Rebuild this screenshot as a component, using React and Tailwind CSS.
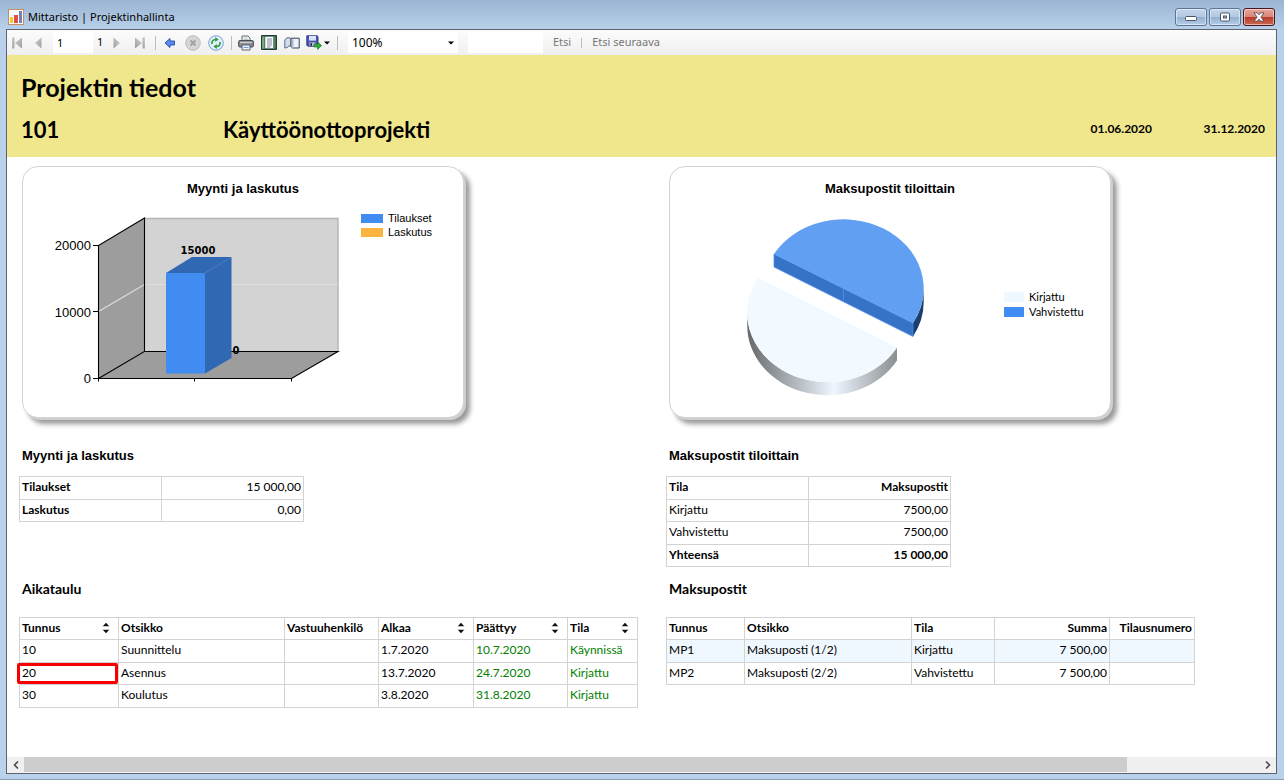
import { useState } from "react";
import clsx from "clsx";

const SCHEDULE_COLUMNS = [
  { title: "Tunnus", width: "w-[99px]", sortable: true },
  { title: "Otsikko", width: "w-[166px]" },
  { title: "Vastuuhenkilö", width: "w-[94px]" },
  { title: "Alkaa", width: "w-[95px]", sortable: true },
  { title: "Päättyy", width: "w-[94px]", sortable: true },
  { title: "Tila", width: "w-[70px]", sortable: true },
];

const SCHEDULE = [
  { id: "10", title: "Suunnittelu", owner: "", start: "1.7.2020", end: "10.7.2020", state: "Käynnissä" },
  { id: "20", title: "Asennus", owner: "", start: "13.7.2020", end: "24.7.2020", state: "Kirjattu" },
  { id: "30", title: "Koulutus", owner: "", start: "3.8.2020", end: "31.8.2020", state: "Kirjattu" },
];

const PAYMENT_COLUMNS = [
  { title: "Tunnus", width: "w-[78px]" },
  { title: "Otsikko", width: "w-[167px]" },
  { title: "Tila", width: "w-[83px]" },
  { title: "Summa", width: "w-[115px]", right: true },
  { title: "Tilausnumero", width: "w-[85px]", right: true },
];

const PAYMENTS = [
  { id: "MP1", title: "Maksuposti (1/2)", state: "Kirjattu", sum: "7 500,00", order: "" },
  { id: "MP2", title: "Maksuposti (2/2)", state: "Vahvistettu", sum: "7 500,00", order: "" },
];

const CELL = "border border-[#d3d3d3] px-0.5 pt-0 pb-0.5 whitespace-nowrap";
const TABLE = "table-fixed border-collapse text-[12px] leading-4";

function AppIcon() {
  return (
    <svg width="16" height="16" viewBox="0 0 16 16">
      <rect x="0.5" y="0.5" width="15" height="15" fill="#fdfdff" stroke="#c98d62" />
      <rect x="2" y="8" width="3" height="6" fill="#f8c63a" />
      <rect x="6" y="6" width="4" height="8" fill="#e2503c" />
      <rect x="11" y="2" width="3" height="12" fill="#7282b8" />
    </svg>
  );
}

function WindowButton({ label, danger, children }) {
  return (
    <button
      type="button"
      aria-label={label}
      className={clsx(
        "flex h-[18px] w-8 items-center justify-center rounded-[3px] border shadow-[inset_0_0_0_1px_rgba(255,255,255,0.5)]",
        danger
          ? "border-[#4a1420] bg-[linear-gradient(#e8a598_0%,#d6867a_48%,#b83a26_50%,#cc6a52_100%)]"
          : "border-[#5b7596] bg-[linear-gradient(#c3d5ea_0%,#b3c9e2_48%,#94b0d0_50%,#b4cde8_100%)]"
      )}
    >
      {children}
    </button>
  );
}

function TitleBar() {
  return (
    <header className="flex h-[29px] items-start justify-between pt-2">
      <div className="flex items-center gap-1 pl-0.5">
        <AppIcon />
        <h1 className="font-['Noto_Sans'] text-[11px] leading-[18px]">Mittaristo | Projektinhallinta</h1>
      </div>
      <div className="flex gap-0.5 pr-[3px]">
        <WindowButton label="Pienennä">
          <svg width="12" height="8" viewBox="0 0 12 8">
            <rect x="0.5" y="3.5" width="11" height="4" rx="1" fill="#fff" stroke="#4b5568" />
          </svg>
        </WindowButton>
        <WindowButton label="Suurenna">
          <svg width="12" height="10" viewBox="0 0 12 10">
            <rect x="1.5" y="1" width="9" height="8" rx="1" fill="#fff" stroke="#4b5568" />
            <rect x="4.5" y="4" width="3" height="2" fill="#9fb8d6" stroke="#4b5568" />
          </svg>
        </WindowButton>
        <WindowButton label="Sulje" danger>
          <svg width="12" height="10" viewBox="0 0 12 10">
            <path d="M1 .8h3.2L6 2.8 7.8.8H11L7.9 5 11 9.2H7.8L6 7.2l-1.8 2H1L4.1 5z" fill="#fff" stroke="#5a4a5a" strokeWidth="0.9" />
          </svg>
        </WindowButton>
      </div>
    </header>
  );
}

function ToolButton({ label, wide, children }) {
  return (
    <button
      type="button"
      aria-label={label}
      className={clsx("flex h-6 shrink-0 items-center justify-center", wide ? "w-[30px] gap-0.5" : "w-[23px]")}
    >
      {children}
    </button>
  );
}

function Separator() {
  return <span className="mr-0.5 ml-1 h-3.5 w-px shrink-0 bg-[#bdbdbd]" />;
}

function StepIcon({ flip, bar }) {
  return (
    <svg width="12" height="12" viewBox="0 0 12 12" className={flip ? "-scale-x-100" : ""}>
      <defs>
        <linearGradient id="step" x1="0" y1="0" x2="1" y2="1">
          <stop offset="0" stopColor="#d2d2d2" />
          <stop offset="1" stopColor="#9c9c9c" />
        </linearGradient>
      </defs>
      {bar && <rect x="1" y="0.5" width="2.4" height="11" fill="url(#step)" />}
      <path d={bar ? "M11 .5v11L4 6z" : "M9.5.5v11L3 6z"} fill="url(#step)" />
    </svg>
  );
}

function BackIcon() {
  return (
    <svg width="12" height="12" viewBox="0 0 12 12">
      <path d="M1 6l5-4.5V4h4.5v4H6v2.5z" fill="#5b8cf0" stroke="#2348a8" strokeWidth="0.9" strokeLinejoin="round" />
    </svg>
  );
}

function StopIcon() {
  return (
    <svg width="16" height="16" viewBox="0 0 16 16">
      <circle cx="8" cy="8" r="7.3" fill="#d6d6d6" stroke="#bcbcbc" />
      <path d="M5.500 5.500l5 5m0-5l-5 5" stroke="#a2a2a2" strokeWidth="2" />
    </svg>
  );
}

function RefreshIcon() {
  return (
    <svg width="16" height="16" viewBox="0 0 16 16">
      <circle cx="8" cy="8" r="7.3" fill="#e2effc" stroke="#7aa2d8" />
      <path d="M4 9C3.600 6.400 5 4.600 7.600 4.500M12 7c.4 2.600-1 4.400-3.600 4.500" fill="none" stroke="#2f9e3a" strokeWidth="1.7" />
      <path d="M7.200 2l3.400 2.500-3.400 2.600zM8.800 8.900l-3.400 2.600 3.400 2.500z" fill="#2f9e3a" />
    </svg>
  );
}

function PrintIcon() {
  return (
    <svg width="16" height="16" viewBox="0 0 16 16">
      <path d="M4 6V1h6l2 2v3z" fill="#fff" stroke="#55585f" strokeWidth="0.9" />
      <path d="M5.5 3h4M5.5 4.6h5" stroke="#8aa" strokeWidth="0.7" />
      <rect x="0.6" y="5.5" width="14.8" height="6.5" rx="1.2" fill="#85888f" stroke="#3f4249" strokeWidth="0.9" />
      <rect x="2" y="6.8" width="12" height="1.4" fill="#c9ccd2" />
      <path d="M4 10h8v5H4z" fill="#eaf2ff" stroke="#55585f" strokeWidth="0.9" />
      <path d="M5.5 12.5h5" stroke="#6aa0dc" />
    </svg>
  );
}

function LayoutIcon() {
  return (
    <svg width="16" height="15" viewBox="0 0 16 15">
      <rect x="0.6" y="0.6" width="14.8" height="13.8" rx="0.5" fill="#4f8a55" stroke="#1f3c2c" strokeWidth="1.2" />
      <path d="M2 1.600v12" stroke="#a8cfa4" strokeWidth="1" />
      <rect x="4" y="1.600" width="8.400" height="11.800" fill="#fff" stroke="#5a6a80" strokeWidth="0.6" />
      <path d="M6 4h5M6 6h5M6 8h5M6 10h5M6 12h3.500" stroke="#6a7496" strokeWidth="0.9" />
    </svg>
  );
}

function BookIcon() {
  return (
    <svg width="16" height="14" viewBox="0 0 16 14">
      <path d="M.8 12V4l2-2.200h3L7 3.400V10H4.600L3.400 11.500z" fill="#d3dcea" stroke="#5d6c86" />
      <path d="M7 10.500V2.200h8.200v9.800H8.600z" fill="#edf2fb" stroke="#39404f" />
      <path d="M8.800 3.200v7.400" fill="none" stroke="#aebfdc" strokeWidth="1.6" />
    </svg>
  );
}

function SaveIcon() {
  return (
    <svg width="16" height="15" viewBox="0 0 16 15" className="shrink-0">
      <path d="M.8.8h10.4l.8.8v9.6H1.8l-1-1z" fill="#4c54b8" stroke="#2b2f7a" strokeWidth="0.9" />
      <rect x="3" y="1" width="7" height="4.600" fill="#d8e4fa" />
      <rect x="3.400" y="7.400" width="6" height="3.600" fill="#b9bccb" />
      <rect x="4.400" y="8.200" width="1.600" height="2.800" fill="#23264f" />
      <path d="M8 9.200h3.600V6.800L15.600 10.600l-4 3.800V12H8z" fill="#2fae3b" stroke="#1c7328" strokeWidth="0.7" />
    </svg>
  );
}

function Caret() {
  return (
    <svg width="6" height="4" viewBox="0 0 6 4" className="shrink-0">
      <path d="M0 .5h6L3 3.5z" fill="#000" />
    </svg>
  );
}

function Toolbar() {
  const [page, setPage] = useState("1");
  const [zoom, setZoom] = useState("100%");
  const [query, setQuery] = useState("");

  return (
    <div className="flex h-[25px] items-center bg-linear-to-b from-[#fcfcfc] to-[#efefef] font-['Noto_Sans'] text-[11px]">
      <button type="button" aria-label="Ensimmäinen sivu" className="flex h-6 w-[19px] shrink-0 items-center justify-center">
        <StepIcon bar />
      </button>
      <ToolButton label="Edellinen sivu"><StepIcon /></ToolButton>
      <input
        aria-label="Sivu"
        value={page}
        onChange={(event) => setPage(event.target.value)}
        className="ml-1 h-[21px] w-10 bg-white pl-1 outline-none"
      />
      <span className="w-3 pl-1">1</span>
      <ToolButton label="Seuraava sivu"><StepIcon flip /></ToolButton>
      <ToolButton label="Viimeinen sivu"><StepIcon flip bar /></ToolButton>
      <Separator />
      <ToolButton label="Takaisin"><BackIcon /></ToolButton>
      <ToolButton label="Pysäytä"><StopIcon /></ToolButton>
      <ToolButton label="Päivitä"><RefreshIcon /></ToolButton>
      <Separator />
      <ToolButton label="Tulosta"><PrintIcon /></ToolButton>
      <ToolButton label="Tulostusasettelu"><LayoutIcon /></ToolButton>
      <ToolButton label="Sivun asetukset"><BookIcon /></ToolButton>
      <ToolButton label="Vie" wide>
        <SaveIcon />
        <Caret />
      </ToolButton>
      <Separator />
      <div className="relative ml-2">
        <select
          aria-label="Zoomaus"
          value={zoom}
          onChange={(event) => setZoom(event.target.value)}
          className="block h-[21px] w-[110px] appearance-none bg-white pl-1 text-[12px] outline-none"
        >
          <option>50%</option>
          <option>100%</option>
          <option>200%</option>
        </select>
        <span className="pointer-events-none absolute inset-y-0 right-1 flex items-center">
          <Caret />
        </span>
      </div>
      <input
        aria-label="Etsittävä teksti"
        value={query}
        onChange={(event) => setQuery(event.target.value)}
        className="ml-2.5 h-[21px] w-[75px] bg-white px-1 outline-none"
      />
      <button type="button" className="ml-2.5 text-[#777]">Etsi</button>
      <span className="mx-2.5 h-2.5 w-px bg-[#bdbdbd]" />
      <button type="button" className="text-[#777]">Etsi seuraava</button>
    </div>
  );
}

function ReportHeader() {
  return (
    <div className="h-[102px] bg-[#f0e68c] pt-4 pr-[11px] pl-3.5 font-bold">
      <h2 className="text-[25px] leading-8">Projektin tiedot</h2>
      <div className="mt-2 flex h-9 items-center">
        <span className="w-[202px] text-[22px]">101</span>
        <span className="flex-1 text-[22px]">Käyttöönottoprojekti</span>
        <span className="w-[113px] text-[12px]">01.06.2020</span>
        <span className="text-[12px]">31.12.2020</span>
      </div>
    </div>
  );
}

function ChartCard({ title, children }) {
  return (
    <figure className="ml-[3px] h-[252px] w-[442px] rounded-2xl border border-[#d3d3d3] bg-white pt-3 shadow-[2px_2px_0_#cfcfcf,6px_6px_5px_#999]">
      <figcaption className="text-center font-['Liberation_Sans'] text-[13px] leading-5 font-bold">{title}</figcaption>
      <div className="flex items-start">{children}</div>
    </figure>
  );
}

function BarChart() {
  return (
    <svg width="331" height="200" viewBox="23 199 331 200" className="shrink-0">
      <path d="M98.5 245.5l46-27.5v133.5l-46 27z" fill="#9d9d9d" />
      <path d="M144.5 218H338v133.5H144.5z" fill="#d3d3d3" />
      <path d="M98.5 378.5l46-27H338l-46 27z" fill="#9d9d9d" />
      <path d="M144.5 218.500H338v133" fill="none" stroke="#b4b4b4" strokeWidth="1.4" />
      <path d="M98.5 311.5l46-27H338" fill="none" stroke="#dedede" strokeWidth="1.2" />
      <path d="M98.5 378.5V245.5l46-27.5v133.5zM144.5 351.5H338l-46.500 27h-193" fill="none" stroke="#000" strokeWidth="1.1" />
      <path d="M93 245.500h5.500M93 311.500h5.500M93 378.500h5.500M98.500 378.500v3M194.500 378.500v3M291.500 378.500v3" stroke="#000" />
      <path d="M166 273l26-16h39.500l-26.500 16z" fill="#3068b4" />
      <path d="M205 273l26.500-16v101L205 373.500z" fill="#3068b4" />
      <path d="M166 273h39v100.500h-39z" fill="#418cf0" />
      <g fontFamily="Liberation Sans" fontSize="13" textAnchor="end">
        <text x="91" y="250">20000</text>
        <text x="91" y="317">10000</text>
        <text x="91" y="383">0</text>
      </g>
      <g fontFamily="DejaVu Sans" fontSize="10" fontWeight="bold" textAnchor="middle">
        <text x="198" y="254">15000</text>
        <text x="236" y="354">0</text>
      </g>
    </svg>
  );
}

function PieChart() {
  return (
    <svg width="334" height="200" viewBox="670 199 334 200" className="shrink-0">
      <defs>
        <linearGradient id="pale-rim" gradientUnits="userSpaceOnUse" x1="747" y1="0" x2="897" y2="0">
          <stop offset="0" stopColor="#66696b" />
          <stop offset="0.58" stopColor="#eef6ff" />
          <stop offset="1" stopColor="#8b8f91" />
        </linearGradient>
      </defs>
      <path d="M923.700 289A80 69 0 0 1 913 323v13.500A80 69 0 0 0 923.700 302z" fill="#1c3f70" />
      <path d="M774 254l139 69v13.500L774 267z" fill="#3673c7" stroke="#418cf0" strokeWidth="0.7" />
      <path d="M843.500 289v13" stroke="#418cf0" />
      <path d="M774 254A80 69 0 0 1 913 323z" fill="#619ff3" />
      <path d="M747.300 312.500A80.200 69.300 0 0 0 897 347.500v13A80.200 69.300 0 0 1 747.300 325.500z" fill="url(#pale-rim)" />
      <path d="M758 278A80 69 0 0 0 897 347.500z" fill="#f2f9ff" />
    </svg>
  );
}

function Legend({ items, className }) {
  return (
    <ul className={className}>
      {items.map((item) => (
        <li key={item.label} className="flex items-center gap-[5px]">
          <span className={item.swatch} />
          {item.label}
        </li>
      ))}
    </ul>
  );
}

function SectionTitle({ arial, children }) {
  return (
    <h3
      className={clsx(
        "pl-[3px] leading-5 font-bold",
        arial ? "font-['Liberation_Sans'] text-[13px]" : "text-[14px]"
      )}
    >
      {children}
    </h3>
  );
}

function SortIcon() {
  return (
    <svg width="8" height="12" viewBox="0 0 8 12">
      <path d="M1 4L4 .8 7 4zM1 8l3 3.200L7 8z" fill="#111" />
      <path d="M.5 4.500h7M.5 7.500h7" stroke="#b8b8b8" strokeWidth="0.8" />
    </svg>
  );
}

function HeaderCells({ columns }) {
  return (
    <tr className="h-[22px]">
      {columns.map((column) => (
        <th key={column.title} className={clsx(CELL, column.width, column.right ? "text-right" : "text-left")}>
          {column.sortable ? (
            <span className="flex items-center justify-between pr-1.5">
              {column.title}
              <button type="button" aria-label={`Järjestä: ${column.title}`}>
                <SortIcon />
              </button>
            </span>
          ) : (
            column.title
          )}
        </th>
      ))}
    </tr>
  );
}

function SalesTable() {
  return (
    <table className={clsx(TABLE, "mt-2.5 w-[285px]")}>
      <tbody>
        <tr className="h-[23px]">
          <th className={clsx(CELL, "text-left")}>Tilaukset</th>
          <td className={clsx(CELL, "text-right")}>15 000,00</td>
        </tr>
        <tr className="h-[22px]">
          <th className={clsx(CELL, "text-left")}>Laskutus</th>
          <td className={clsx(CELL, "text-right")}>0,00</td>
        </tr>
      </tbody>
    </table>
  );
}

function PaymentStateTable() {
  return (
    <table className={clsx(TABLE, "mt-2.5 w-[285px]")}>
      <thead>
        <tr className="h-[23px]">
          <th className={clsx(CELL, "text-left")}>Tila</th>
          <th className={clsx(CELL, "text-right")}>Maksupostit</th>
        </tr>
      </thead>
      <tbody>
        <tr className="h-[22px]">
          <td className={CELL}>Kirjattu</td>
          <td className={clsx(CELL, "text-right")}>7500,00</td>
        </tr>
        <tr className="h-[23px]">
          <td className={CELL}>Vahvistettu</td>
          <td className={clsx(CELL, "text-right")}>7500,00</td>
        </tr>
      </tbody>
      <tfoot>
        <tr className="h-[22px]">
          <th className={clsx(CELL, "text-left")}>Yhteensä</th>
          <th className={clsx(CELL, "text-right")}>15 000,00</th>
        </tr>
      </tfoot>
    </table>
  );
}

function ScheduleTable({ selected }) {
  return (
    <table className={clsx(TABLE, "mt-[18px] w-[619px]")}>
      <thead>
        <HeaderCells columns={SCHEDULE_COLUMNS} />
      </thead>
      <tbody>
        {SCHEDULE.map((row) => (
          <tr key={row.id} className="odd:h-[23px] even:h-[22px]">
            <td className={clsx(CELL, "relative")}>
              {row.id}
              {row.id === selected && (
                <span className="absolute inset-y-0 right-0 -left-[3px] rounded-xs border-3 border-[#f60000]" />
              )}
            </td>
            <td className={CELL}>{row.title}</td>
            <td className={CELL}>{row.owner}</td>
            <td className={CELL}>{row.start}</td>
            <td className={clsx(CELL, "text-[#008000]")}>{row.end}</td>
            <td className={clsx(CELL, "text-[#008000]")}>{row.state}</td>
          </tr>
        ))}
      </tbody>
    </table>
  );
}

function PaymentTable() {
  return (
    <table className={clsx(TABLE, "mt-[18px] w-[529px]")}>
      <thead>
        <HeaderCells columns={PAYMENT_COLUMNS} />
      </thead>
      <tbody>
        {PAYMENTS.map((row) => (
          <tr key={row.id} className="odd:h-[23px] odd:bg-[#f0f8ff] even:h-[22px]">
            <td className={CELL}>{row.id}</td>
            <td className={CELL}>{row.title}</td>
            <td className={CELL}>{row.state}</td>
            <td className={clsx(CELL, "text-right")}>{row.sum}</td>
            <td className={CELL}>{row.order}</td>
          </tr>
        ))}
      </tbody>
    </table>
  );
}

function ScrollBar() {
  return (
    <div className="flex h-4 bg-[#f0f0f0] pb-px">
      <button type="button" aria-label="Vieritä vasemmalle" className="flex w-[17px] items-center justify-center">
        <svg width="6" height="8" viewBox="0 0 6 8"><path d="M5 .5L1.500 4 5 7.500" fill="none" stroke="#505050" strokeWidth="1.700" /></svg>
      </button>
      <div className="flex flex-1">
        <div className="flex-[1103] bg-[#cdcdcd]" />
        <div className="flex-[132]" />
      </div>
      <button type="button" aria-label="Vieritä oikealle" className="flex w-[17px] items-center justify-center">
        <svg width="6" height="8" viewBox="0 0 6 8"><path d="M1 .5L4.500 4 1 7.500" fill="none" stroke="#505050" strokeWidth="1.700" /></svg>
      </button>
    </div>
  );
}

export default function App() {
  return (
    <div className="flex min-h-screen flex-col border-b border-[#8e9cab] bg-[#b9d1ea] bg-[linear-gradient(#9ab4d2_0px,#b9d1ea_30px)] px-1.5 pb-[5px] font-['Lato',sans-serif] text-black">
      <TitleBar />
      <div className="mr-px flex flex-1 flex-col border border-[#5f646c] bg-white">
        <Toolbar />
        <ReportHeader />
        <main className="grid flex-1 grid-cols-[647fr_622fr] content-start gap-y-3 overflow-hidden pt-[9px]">
          <section className="pl-3">
            <ChartCard title="Myynti ja laskutus">
              <BarChart />
              <Legend
                className="pt-3 pl-[7px] font-['Liberation_Sans'] text-[11px] leading-[14px]"
                items={[
                  { label: "Tilaukset", swatch: "h-[9px] w-[22px] bg-[#418cf0]" },
                  { label: "Laskutus", swatch: "h-[9px] w-[22px] bg-[#fcb441]" },
                ]}
              />
            </ChartCard>
            <div className="mt-7">
              <SectionTitle arial>Myynti ja laskutus</SectionTitle>
              <SalesTable />
            </div>
          </section>
          <section className="pl-3">
            <ChartCard title="Maksupostit tiloittain">
              <PieChart />
              <Legend
                className="pt-[90px] text-[11px] leading-[15px]"
                items={[
                  { label: "Kirjattu", swatch: "h-2.5 w-5 bg-[#f0f8ff]" },
                  { label: "Vahvistettu", swatch: "h-2.5 w-5 bg-[#418cf0]" },
                ]}
              />
            </ChartCard>
            <div className="mt-7">
              <SectionTitle arial>Maksupostit tiloittain</SectionTitle>
              <PaymentStateTable />
            </div>
          </section>
          <section className="pl-3">
            <SectionTitle>Aikataulu</SectionTitle>
            <ScheduleTable selected="20" />
          </section>
          <section className="pl-3">
            <SectionTitle>Maksupostit</SectionTitle>
            <PaymentTable />
          </section>
        </main>
        <ScrollBar />
      </div>
    </div>
  );
}
